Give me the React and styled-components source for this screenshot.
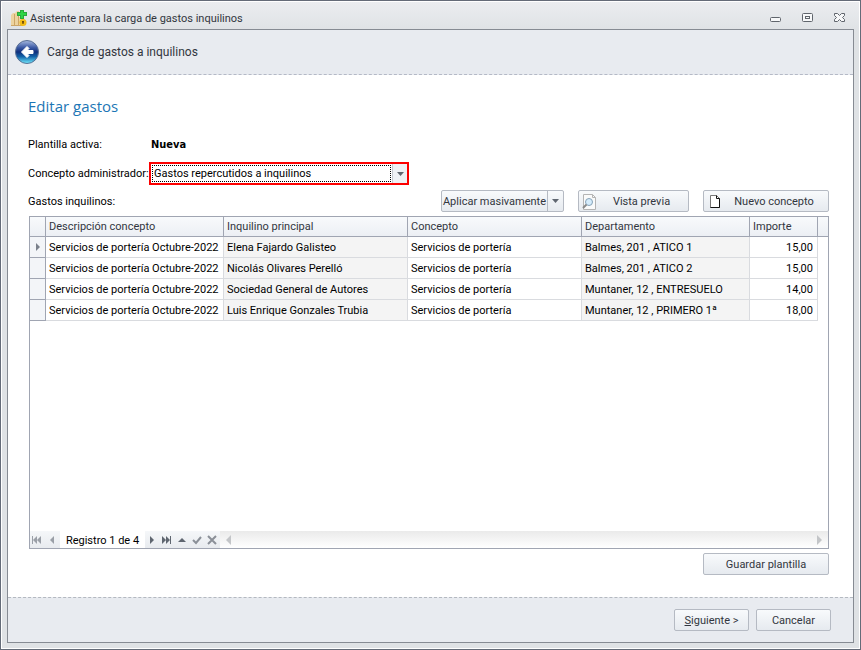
import React, { useState } from "react";
import styled, { createGlobalStyle, css } from "styled-components";

const rows = [
    { id: 1, descripcion: "Servicios de portería Octubre-2022", inquilino: "Elena Fajardo Galisteo", concepto: "Servicios de portería", departamento: "Balmes, 201 , ATICO 1", importe: "15,00" },
    { id: 2, descripcion: "Servicios de portería Octubre-2022", inquilino: "Nicolás Olivares Perelló", concepto: "Servicios de portería", departamento: "Balmes, 201 , ATICO 2", importe: "15,00" },
    { id: 3, descripcion: "Servicios de portería Octubre-2022", inquilino: "Sociedad General de Autores", concepto: "Servicios de portería", departamento: "Muntaner, 12 , ENTRESUELO", importe: "14,00" },
    { id: 4, descripcion: "Servicios de portería Octubre-2022", inquilino: "Luis Enrique Gonzales Trubia", concepto: "Servicios de portería", departamento: "Muntaner, 12 , PRIMERO 1ª", importe: "18,00" },
];

function AppIcon() {
    return (
        <svg width="16" height="16" viewBox="0 0 16 16" aria-hidden="true">
            <path d="M0 5l2-2h2v13H0zM4 3l2-2h2v15H4zM8 7h4v9H8z" fill="#ecd3a0" />
            <path d="M3 4h1v12H3zM7 3h1v13H7zM0 15h12v1H0z" fill="#cda566" />
            <path d="M9 0h4v2h3v4h-3v3H9V6H6V2h3z" fill="#2aa83c" />
            <path d="M10 1h2v2h3v2h-3v3h-2V5H7V3h3z" fill="#2fd447" />
            <circle cx="12" cy="12.5" r="3.5" fill="#f3bd16" />
            <path d="M11 11h2v1l-.5 2h-1l-.5-2z" fill="#6f4d08" />
        </svg>
    );
}

function BackIcon() {
    return (
        <svg width="24" height="24" viewBox="0 0 24 24" aria-hidden="true">
            <defs>
                <linearGradient id="ball" x1="0" y1="0" x2="0" y2="1">
                    <stop offset="0" stopColor="#a9bbe0" />
                    <stop offset="0.3" stopColor="#3d5ba6" />
                    <stop offset="0.5" stopColor="#0f2f7c" />
                    <stop offset="0.7" stopColor="#1263a8" />
                    <stop offset="1" stopColor="#74ecff" />
                </linearGradient>
            </defs>
            <circle cx="12" cy="12" r="11.5" fill="url(#ball)" stroke="#5a6f94" />
            <path d="M12 6.5 6.5 12l5.5 5.5 2-2-2-2h6v-3h-6l2-2z" fill="#fff" stroke="#fff" strokeLinejoin="round" />
        </svg>
    );
}

function PreviewIcon() {
    return (
        <svg width="16" height="16" viewBox="0 0 16 16" aria-hidden="true">
            <path d="M1.5.5h9l3 3v12h-12z" fill="#fafafa" stroke="#b4b4b4" />
            <path d="M10.5.5v3h3" fill="none" stroke="#b4b4b4" />
            <circle cx="7" cy="8" r="3.5" fill="#d5ecfb" stroke="#86a2b8" />
            <path d="M4.5 10.5 1 14" stroke="#8a8a8a" strokeWidth="2" />
        </svg>
    );
}

function PageIcon() {
    return (
        <svg width="16" height="16" viewBox="0 0 16 16" aria-hidden="true">
            <path d="M3.5 1.5h6l3 3v9h-9z" fill="#fff" stroke="#777" />
            <path d="M9.5 1.5v3h3v9h-9" fill="none" stroke="#111" />
        </svg>
    );
}

function Glyph({ d, color = "#5f6670", fill = true }) {
    return (
        <svg width="12" height="12" viewBox="0 0 12 12" aria-hidden="true">
            <path d={d} fill={fill ? color : "none"} stroke={fill ? "none" : color} strokeWidth="2" />
        </svg>
    );
}

const DOWN = "M3 4h7L6.5 8z";

function App() {
    const [concepto, setConcepto] = useState("Gastos repercutidos a inquilinos");
    const [selected, setSelected] = useState(1);

    return (
        <Window>
            <GlobalStyle />
            <TitleBar>
                <AppIcon />
                <TitleText>Asistente para la carga de gastos inquilinos</TitleText>
                <WindowButtons>
                    <CaptionButton aria-label="Minimizar">
                        <svg width="12" height="12" viewBox="0 0 12 12">
                            <rect x=".5" y="5.5" width="10" height="4" rx="1" fill="#f7f8f9" stroke="#60656c" />
                        </svg>
                    </CaptionButton>
                    <CaptionButton aria-label="Maximizar">
                        <svg width="12" height="12" viewBox="0 0 12 12">
                            <rect x=".5" y="1.5" width="10" height="8" rx="1" fill="#f7f8f9" stroke="#60656c" />
                            <rect x="3.5" y="4.5" width="4" height="2" fill="none" stroke="#60656c" />
                        </svg>
                    </CaptionButton>
                    <CaptionButton aria-label="Cerrar">
                        <svg width="12" height="12" viewBox="0 0 12 12">
                            <path d="M.5 1.5h3l2 2 2-2h3v2l-2 2 2 2v2h-3l-2-2-2 2h-3v-2l2-2-2-2z" fill="#f7f8f9" stroke="#60656c" />
                        </svg>
                    </CaptionButton>
                </WindowButtons>
            </TitleBar>
            <Client>
                <Header>
                    <BackButton aria-label="Atrás"><BackIcon /></BackButton>
                    <HeaderTitle>Carga de gastos a inquilinos</HeaderTitle>
                </Header>
                <Body>
                    <Heading>Editar gastos</Heading>
                    <InfoRow>
                        <FieldLabel>Plantilla activa:</FieldLabel>
                        <strong>Nueva</strong>
                    </InfoRow>
                    <FieldRow>
                        <FieldLabel as="label" htmlFor="concepto">Concepto administrador:</FieldLabel>
                        <SelectBox>
                            <Select id="concepto" value={concepto} onChange={(e) => setConcepto(e.target.value)}>
                                <option>Gastos repercutidos a inquilinos</option>
                            </Select>
                            <SelectArrow><Glyph d={DOWN} /></SelectArrow>
                        </SelectBox>
                    </FieldRow>
                    <Toolbar>
                        <ToolbarLabel>Gastos inquilinos:</ToolbarLabel>
                        <SplitButton>
                            <SplitMain>Aplicar masivamente</SplitMain>
                            <SplitArrow aria-label="Más opciones"><Glyph d={DOWN} /></SplitArrow>
                        </SplitButton>
                        <Button $width={111}><PreviewIcon /><ButtonText>Vista previa</ButtonText></Button>
                        <Button $width={126}><PageIcon /><ButtonText>Nuevo concepto</ButtonText></Button>
                    </Toolbar>
                    <Grid>
                        <GridScroll>
                            <Table>
                                <colgroup>
                                    <Col $width={16} />
                                    <Col $width={178} />
                                    <Col $width={184} />
                                    <Col $width={174} />
                                    <Col $width={168} />
                                    <Col $width={68} />
                                    <col />
                                </colgroup>
                                <thead>
                                    <tr>
                                        <Th />
                                        <Th>Descripción concepto</Th>
                                        <Th>Inquilino principal</Th>
                                        <Th>Concepto</Th>
                                        <Th>Departamento</Th>
                                        <Th>Importe</Th>
                                        <Th />
                                    </tr>
                                </thead>
                                <tbody>
                                    {rows.map((row) => (
                                        <tr key={row.id} onClick={() => setSelected(row.id)}>
                                            <Indicator>
                                                {selected === row.id && <Glyph d="M4 2v8l4-4z" color="#7b818b" />}
                                            </Indicator>
                                            <Td>{row.descripcion}</Td>
                                            <Td $readOnly>{row.inquilino}</Td>
                                            <Td>{row.concepto}</Td>
                                            <Td $readOnly>{row.departamento}</Td>
                                            <Td $right>{row.importe}</Td>
                                            <td />
                                        </tr>
                                    ))}
                                </tbody>
                            </Table>
                        </GridScroll>
                        <Navigator>
                            <NavGroup>
                                <NavButton aria-label="Primero" disabled><Glyph d="M1 2h1v8H1zM2 6l4-4v8zM6 6l4-4v8z" color="#9a9fa7" /></NavButton>
                                <NavButton aria-label="Anterior" disabled><Glyph d="M4 6l4-4v8z" color="#9a9fa7" /></NavButton>
                            </NavGroup>
                            <NavText>Registro 1 de 4</NavText>
                            <NavGroup>
                                <NavButton aria-label="Siguiente registro"><Glyph d="M4 2v8l4-4z" /></NavButton>
                                <NavButton aria-label="Último"><Glyph d="M1 2v8l4-4zM5 2v8l4-4zM9 2h1v8H9z" /></NavButton>
                                <NavButton aria-label="Editar"><Glyph d="M2 8h8L6 4z" /></NavButton>
                                <NavButton aria-label="Aceptar" disabled><Glyph d="M2 6l3 3 5-6" color="#8b9098" fill={false} /></NavButton>
                                <NavButton aria-label="Descartar" disabled><Glyph d="M2 2l8 8M10 2l-8 8" color="#8b9098" fill={false} /></NavButton>
                            </NavGroup>
                            <ScrollBar>
                                <Glyph d="M3 6l5-5v10z" color="#c3c5c8" />
                                <Glyph d="M4 1v10l5-5z" color="#c3c5c8" />
                            </ScrollBar>
                        </Navigator>
                    </Grid>
                    <SaveRow>
                        <Button $width={126}>Guardar plantilla</Button>
                    </SaveRow>
                </Body>
                <Footer>
                    <Button $width={75}><span><u>S</u>iguiente &gt;</span></Button>
                    <Button $width={75}>Cancelar</Button>
                </Footer>
            </Client>
        </Window>
    );
}

const GlobalStyle = createGlobalStyle`
    * {
        box-sizing: border-box;
    }

    body {
        margin: 0;
        color: #000;
        font: 11px/14px Roboto, Tahoma, sans-serif;
    }

    button, select {
        font: inherit;
        color: inherit;
    }

    svg {
        display: block;
        flex: none;
    }
`;

const buttonFace = css`
    border: 1px solid #b5bac3;
    border-radius: 2px;
    background: linear-gradient(#f8fafc, #e6eaef);
    color: #32363e;
`;

const Window = styled.div`
    display: flex;
    flex-direction: column;
    min-height: 100vh;
    padding: 0 5px 5px;
    border: 1px solid #646b78;
    outline: 1px solid #fff;
    outline-offset: -2px;
    background: linear-gradient(#ebedf0, #dfe2e5 30px);
`;

const TitleBar = styled.header`
    display: flex;
    align-items: center;
    gap: 3px;
    height: 28px;
    padding: 6px 9px 0 5px;
    color: #32363e;
`;

const TitleText = styled.span`
    padding-top: 2px;
`;

const WindowButtons = styled.div`
    display: flex;
    gap: 20px;
    margin-left: auto;
`;

const CaptionButton = styled.button`
    padding: 0;
    border: 0;
    background: none;
`;

const Client = styled.main`
    display: flex;
    flex: 1;
    flex-direction: column;
    margin: 0 1px 1px;
    border: 1px solid #868b93;
    background: #fff;
`;

const Header = styled.div`
    display: flex;
    align-items: center;
    gap: 8px;
    height: 45px;
    padding: 0 7px;
    border-bottom: 1px dashed #b4b9c6;
    background: #e8ebf0;
`;

const BackButton = styled.button`
    padding: 0;
    border: 0;
    background: none;
`;

const HeaderTitle = styled.h1`
    margin: 0;
    font-size: 12px;
    font-weight: 400;
    color: #32363e;
`;

const Body = styled.section`
    display: flex;
    flex: 1;
    flex-direction: column;
    padding: 15px 24px 22px 20px;
`;

const Heading = styled.h2`
    margin: 0;
    font-family: "Open Sans", "Segoe UI", sans-serif;
    font-size: 15px;
    line-height: 32px;
    font-weight: 400;
    color: #1c76b5;
`;

const InfoRow = styled.div`
    display: flex;
    align-items: center;
    height: 22px;
    margin-top: 12px;

    strong {
        padding-left: 2px;
        font-family: "DejaVu Sans Condensed", "DejaVu Sans", sans-serif;
    }
`;

const FieldRow = styled.div`
    display: flex;
    align-items: center;
    height: 23px;
    margin-top: 6px;
`;

const FieldLabel = styled.span`
    width: 121px;
    white-space: nowrap;
`;

const SelectBox = styled.div`
    display: flex;
    width: 260px;
    height: 23px;
    border: 2px solid #fc0000;
    background: #fff;
`;

const Select = styled.select`
    flex: 1;
    margin: 1px;
    padding: 1px 1px 0;
    border: 1px dotted #000;
    outline: 0;
    appearance: none;
    background: none;
`;

const SelectArrow = styled.span`
    display: flex;
    align-items: center;
    justify-content: center;
    width: 15px;
    border-left: 1px solid #c5cad2;
    background: #eef1f5;
    pointer-events: none;
`;

const Toolbar = styled.div`
    display: flex;
    align-items: center;
    gap: 14px;
    margin-top: 5px;
`;

const ToolbarLabel = styled.span`
    flex: 1;
    padding-top: 2px;
`;

const Button = styled.button`
    ${buttonFace}
    display: flex;
    align-items: center;
    justify-content: center;
    width: ${(props) => props.$width}px;
    height: 22px;
    padding: 1px 3px 0;
    white-space: nowrap;
`;

const ButtonText = styled.span`
    flex: 1;
    text-align: center;
`;

const SplitButton = styled.div`
    ${buttonFace}
    display: flex;
    width: 123px;
    height: 22px;
`;

const SplitMain = styled.button`
    flex: 1;
    padding: 1px 0 0;
    border: 0;
    background: none;
    white-space: nowrap;
`;

const SplitArrow = styled.button`
    flex: none;
    width: 16px;
    padding: 0 2px 0 1px;
    border: 0;
    border-left: 1px solid #b5bac3;
    background: none;
`;

const Grid = styled.div`
    display: flex;
    flex: 1;
    flex-direction: column;
    margin: 4px 0 0 1px;
    border: 1px solid #a0a5b2;
`;

const GridScroll = styled.div`
    flex: 1;
`;

const Table = styled.table`
    width: 100%;
    table-layout: fixed;
    border-spacing: 0;
`;

const Col = styled.col`
    width: ${(props) => props.$width}px;
`;

const Th = styled.th`
    height: 20px;
    padding: 0 3px;
    border-right: 1px solid #a0a5b2;
    border-bottom: 1px solid #a0a5b2;
    background: linear-gradient(#f8fafc, #eceff4);
    color: #32363e;
    font-weight: 400;
    text-align: left;
    white-space: nowrap;

    &:last-child {
        border-right: 0;
    }
`;

const Td = styled.td`
    height: 21px;
    padding: 2px 4px 0 3px;
    border-right: 1px solid #d9dbdf;
    border-bottom: 1px solid #d9dbdf;
    background: ${(props) => (props.$readOnly ? "#f4f4f4" : "#fff")};
    text-align: ${(props) => (props.$right ? "right" : "left")};
    white-space: nowrap;
`;

const Indicator = styled.td`
    padding: 0 2px;
    border-right: 1px solid #a0a5b2;
    border-bottom: 1px solid #a0a5b2;
    background: #f3f5f8;
`;

const Navigator = styled.div`
    display: flex;
    height: 17px;
`;

const NavGroup = styled.div`
    display: flex;
    align-items: center;
    gap: 3px;
    padding: 0 2px 0 1px;
    background: linear-gradient(#f5f7f9, #e8ebef);
`;

const NavButton = styled.button`
    padding: 0;
    border: 0;
    background: none;
`;

const NavText = styled.span`
    width: 85px;
    padding-top: 1px;
    line-height: 17px;
    text-align: center;
`;

const ScrollBar = styled.div`
    display: flex;
    flex: 1;
    align-items: center;
    justify-content: space-between;
    padding: 0 3px;
    background: linear-gradient(#eaeaea, #fff);
`;

const SaveRow = styled.div`
    display: flex;
    justify-content: flex-end;
    margin-top: 4px;
`;

const Footer = styled.footer`
    display: flex;
    justify-content: flex-end;
    gap: 7px;
    padding: 11px 22px;
    border-top: 1px dashed #b4b9c0;
    background: #e8ebf0;
`;

export default App;
